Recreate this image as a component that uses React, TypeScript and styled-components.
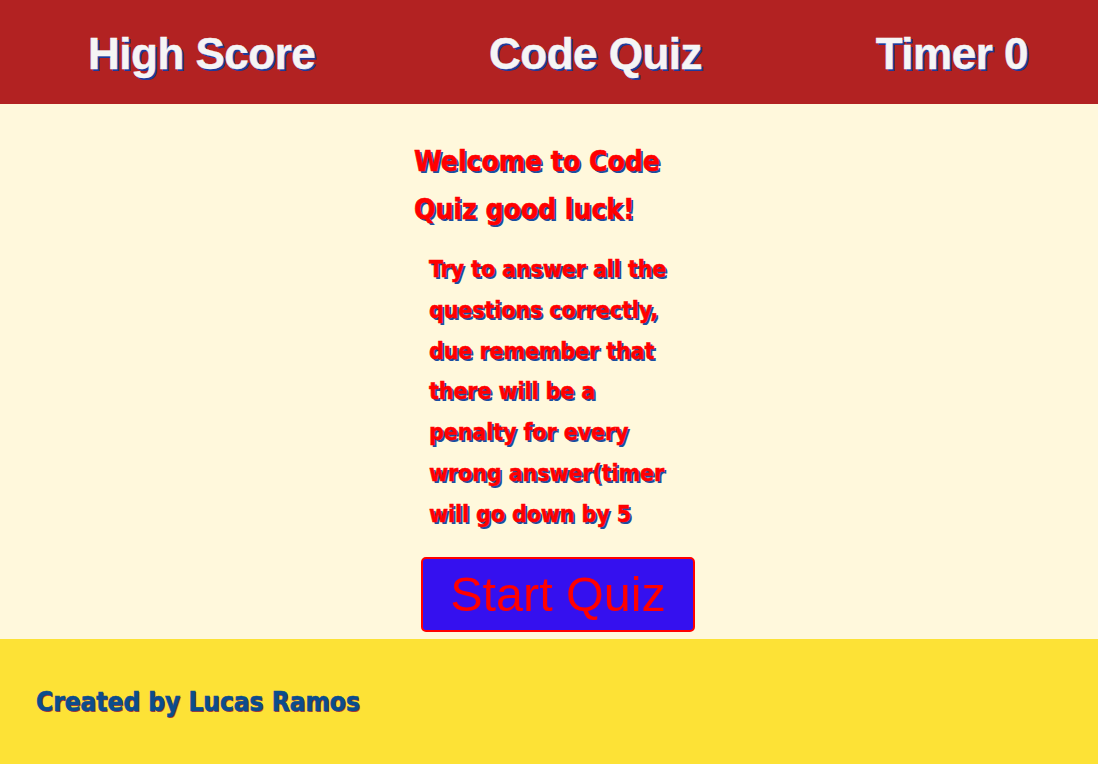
import React from "react";
import styled, { createGlobalStyle } from "styled-components";

const Global = createGlobalStyle`
  html, body { margin: 0; padding: 0; }
  body { font-family: "Liberation Sans", Arial, sans-serif; background: #fff8dc; }
`;

const heavy = `"DejaVu Sans Condensed", "DejaVu Sans", sans-serif`;

const Page = styled.div`
  width: 1098px;
  height: 764px;
  display: flex;
  flex-direction: column;
  overflow: hidden;
`;

const Header = styled.header`
  height: 104px;
  flex: none;
  box-sizing: border-box;
  background: #b22222;
  display: flex;
  align-items: center;
  justify-content: space-between;
  padding: 4px 70px 0 88px;
`;

const HeaderItem = styled.h1`
  margin: 0;
  font-family: "Liberation Sans", Arial, sans-serif;
  font-weight: 700;
  font-size: 44px;
  letter-spacing: -0.5px;
  color: #f5f5f5;
  -webkit-text-stroke: 0.4px #f5f5f5;
  text-shadow: 2px 2px 0 #1d3a9c;
`;

const Main = styled.main`
  flex: 1;
  background: #fff8dc;
  display: flex;
  flex-direction: column;
  align-items: center;
  padding-top: 34px;
`;

const Column = styled.section`
  width: 270px;
  display: flex;
  flex-direction: column;
`;

const Welcome = styled.h2`
  margin: 0;
  font-family: ${heavy};
  font-weight: 700;
  font-size: 28px;
  line-height: 48px;
  color: #ff0000;
  -webkit-text-stroke: 0.6px #ff0000;
  text-shadow: 2px 2px 0 #1a4fa0;
`;

const Info = styled.p`
  margin: 15px 0 0 15px;
  width: 262px;
  font-family: ${heavy};
  font-weight: 700;
  font-size: 23px;
  line-height: 40.8px;
  letter-spacing: -0.1px;
  color: #ff0000;
  -webkit-text-stroke: 0.5px #ff0000;
  text-shadow: 2px 2px 0 #1a4fa0;
`;

const StartButton = styled.button`
  margin: 22px 0 0 7px;
  width: 274px;
  height: 75px;
  align-self: flex-start;
  background: #3510ef;
  border: 2px solid #ff0000;
  border-radius: 5px;
  color: #ff0000;
  font-family: "Liberation Sans", Arial, sans-serif;
  font-size: 48.5px;
  font-weight: 400;
  cursor: pointer;
  padding: 0;
`;

const Footer = styled.footer`
  height: 125px;
  flex: none;
  background: #fde236;
  display: flex;
  align-items: center;
  padding-left: 36px;
`;

const Credit = styled.h3`
  margin: 0;
  font-family: ${heavy};
  font-weight: 700;
  font-size: 26px;
  color: #0b4d8c;
  -webkit-text-stroke: 0.6px #0b4d8c;
  text-shadow: 1px 1px 0 #c0392b;
`;

export default function App() {
  return (
    <>
      <Global />
      <Page>
        <Header>
          <HeaderItem>High Score</HeaderItem>
          <HeaderItem>Code Quiz</HeaderItem>
          <HeaderItem>Timer 0</HeaderItem>
        </Header>
        <Main>
          <Column>
            <Welcome>
              Welcome to Code
              <br />
              Quiz good luck!
            </Welcome>
            <Info>
              Try to answer all the
              <br />
              questions correctly,
              <br />
              due remember that
              <br />
              there will be a
              <br />
              penalty for every
              <br />
              wrong answer(timer
              <br />
              will go down by 5
            </Info>
            <StartButton>Start Quiz</StartButton>
          </Column>
        </Main>
        <Footer>
          <Credit>Created by Lucas Ramos</Credit>
        </Footer>
      </Page>
    </>
  );
}
